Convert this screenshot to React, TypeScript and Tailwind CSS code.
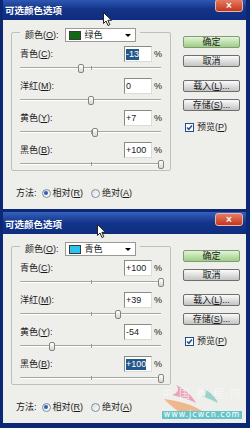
import React from 'react';

type Row = { label: string; hot: string; value: string; num: number; selected?: boolean };

const dialogs: { swatch: string; colorName: string; rows: Row[] }[] = [
  {
    swatch: 'bg-[#0f6a12]',
    colorName: '绿色',
    rows: [
      { label: '青色', hot: 'C', value: '-13', num: -13, selected: true },
      { label: '洋红', hot: 'M', value: '0', num: 0 },
      { label: '黄色', hot: 'Y', value: '+7', num: 7 },
      { label: '黑色', hot: 'B', value: '+100', num: 100 },
    ],
  },
  {
    swatch: 'bg-[#2cc3ee]',
    colorName: '青色',
    rows: [
      { label: '青色', hot: 'C', value: '+100', num: 100 },
      { label: '洋红', hot: 'M', value: '+39', num: 39 },
      { label: '黄色', hot: 'Y', value: '-54', num: -54 },
      { label: '黑色', hot: 'B', value: '+100', num: 100, selected: true },
    ],
  },
];

function Slider({ value }: { value: number }) {
  const pct = ((value + 100) / 200) * 100;
  return (
    <div className="relative h-[10px] mt-[1px]">
      <div className="absolute left-0 right-0 top-[4px] h-[1px] bg-[#a8a8a3]" />
      <div className="absolute left-0 right-0 top-[5px] h-[1px] bg-white" />
      <div className="absolute left-1/2 top-[3px] w-[1px] h-[4px] bg-[#9a9a95]" />
      <div
        className="absolute top-[1px] w-[6px] h-[9px] -ml-[3px] rounded-[2px] border border-[#85857f] bg-gradient-to-b from-white to-[#d6d6d0]"
        style={{ left: `${pct}%` }}
      />
    </div>
  );
}

function ValueRow({ row }: { row: Row }) {
  return (
    <div className="flex flex-col">
      <div className="flex items-center h-[16px]">
        <span className="flex-1">
          {row.label}(<span className="underline">{row.hot}</span>):
        </span>
        <div className="w-[28px] h-[16px] bg-white border border-t-[#8a8a85] border-l-[#8a8a85] border-b-[#dcdcd6] border-r-[#dcdcd6] flex items-center pl-[1px]">
          <span className={row.selected ? 'bg-[#25588a] text-white leading-[11px]' : 'leading-[11px]'}>{row.value}</span>
        </div>
        <span className="w-[7px] ml-[2px]">%</span>
      </div>
      <Slider value={row.num} />
    </div>
  );
}

function Button({ label, hot, tail, primary }: { label: string; hot?: string; tail?: string; primary?: boolean }) {
  return (
    <div
      className={
        'w-[57px] h-[12px] rounded-[2px] border flex items-center justify-center leading-none text-[9px] ' +
        (primary
          ? 'border-[#7f9c72] bg-gradient-to-b from-[#e3f4d8] to-[#9fcd85]'
          : 'border-[#6e6e6e] bg-gradient-to-b from-[#fbfbfb] to-[#c4c4c4]')
      }
    >
      {label}
      {hot && (
        <>
          (<span className="underline">{hot}</span>)
        </>
      )}
      {tail}
    </div>
  );
}

function Radio({ on }: { on?: boolean }) {
  return (
    <span className="w-[9px] h-[9px] rounded-full border border-[#7c8fa8] bg-gradient-to-br from-[#dcdcd6] to-white flex items-center justify-center">
      {on && <span className="w-[4px] h-[4px] rounded-full bg-[#2f62b8]" />}
    </span>
  );
}

function Dialog({ swatch, colorName, rows }: { swatch: string; colorName: string; rows: Row[] }) {
  return (
    <div className="flex flex-col border-l-[3px] border-r-[4px] border-b-[3px] border-[#0c2875]">
      <div className="h-[22px] flex items-start bg-gradient-to-b from-[#3560bd] via-[#133488] to-[#0f2d80]">
        <span className="pl-[2px] pt-[7px] text-[9.5px] leading-[12px] font-bold text-white">可选颜色选项</span>
        <div className="ml-auto mr-[3px] mt-[1px] w-[28px] h-[13px] rounded-[3px] border border-[#e9b7a8] bg-gradient-to-b from-[#e77a62] to-[#c2351d] flex items-center justify-center">
          <span className="text-white text-[10px] font-bold leading-none">×</span>
        </div>
      </div>
      <div className="flex h-[189px] bg-[#eeeeea] pl-[8px] pt-[2px]">
        <div className="flex flex-col w-[160px]">
          <fieldset className="m-0 min-w-0 border border-[#c0c0ba] rounded-[2px] pl-[8px] pr-[9px] pt-[4px] pb-[1px] flex flex-col gap-[5px]">
            <legend className="pl-[5px] pr-[4px] pt-[6px]">
              <div className="flex items-center h-[14px]">
                <span>
                  颜色(<span className="underline">O</span>):
                </span>
                <div className="ml-[6px] w-[71px] h-[14px] bg-white border border-[#9a9a95] flex items-center px-[3px]">
                  <span className={'w-[12px] h-[9px] border border-[#3a3a3a] ' + swatch} />
                  <span className="ml-[4px]">{colorName}</span>
                  <span className="ml-auto mr-[1px] border-x-[3px] border-x-transparent border-t-[3px] border-t-black" />
                </div>
              </div>
            </legend>
            {rows.map((r) => (
              <ValueRow key={r.label} row={r} />
            ))}
          </fieldset>
          <div className="flex items-center h-[14px] mt-[15px] ml-[5px]">
            <span>方法:</span>
            <span className="ml-[5px]">
              <Radio on />
            </span>
            <span className="ml-[2px]">
              相对(<span className="underline">R</span>)
            </span>
            <span className="ml-[8px]">
              <Radio />
            </span>
            <span className="ml-[2px]">
              绝对(<span className="underline">A</span>)
            </span>
          </div>
        </div>
        <div className="ml-[12px] pt-[14px] flex flex-col w-[57px]">
          <Button label="确定" primary />
          <div className="mt-[7px]">
            <Button label="取消" />
          </div>
          <div className="mt-[13px]">
            <Button label="载入" hot="L" tail="..." />
          </div>
          <div className="mt-[7px]">
            <Button label="存储" hot="S" tail="..." />
          </div>
          <div className="mt-[11px] ml-[2px] flex items-center h-[10px]">
            <span className="w-[9px] h-[9px] bg-white border border-[#1f4f85] flex items-center justify-center">
              <svg width="7" height="7" viewBox="0 0 7 7">
                <path d="M1 3.5 L2.8 5.3 L6 1.5" fill="none" stroke="#2a4c9a" strokeWidth="1.5" />
              </svg>
            </span>
            <span className="ml-[3px]">
              预览(<span className="underline">P</span>)
            </span>
          </div>
        </div>
      </div>
    </div>
  );
}

function Cursor({ className }: { className: string }) {
  return (
    <svg className={'absolute ' + className} width="10" height="15" viewBox="0 0 10 15">
      <path d="M0.5 0.5 L0.5 11.5 L3 9 L5 13.5 L6.8 12.7 L4.9 8.3 L8.5 8.3 Z" fill="white" stroke="#222" strokeWidth="1" />
    </svg>
  );
}

export default function App() {
  return (
    <div className="relative w-[250px] h-[428px] overflow-hidden bg-[#0c2875] text-[9px] leading-[12px] text-[#1a1a1a] font-['Liberation_Sans','Noto_Sans_CJK_SC',sans-serif]">
      <div className="-mt-[2px]">
        <Dialog {...dialogs[0]} />
      </div>
      <Dialog {...dialogs[1]} />

      <Cursor className="left-[103px] top-[12px]" />
      <Cursor className="left-[97px] top-[224px]" />

      {/* jcwcn watermark */}
      <div className="absolute left-[158px] top-[381px] w-[88px] h-[40px] flex flex-col items-center">
        <svg width="88" height="30" viewBox="0 0 88 30">
          <path d="M18 4 C26 8 34 14 38 22 C30 18 22 16 14 14 C20 12 22 8 18 4 Z" fill="#e58aa8" opacity="0.75" />
          <path d="M46 8 C52 11 58 16 60 22 C54 19 50 17 44 16 C48 14 48 11 46 8 Z" fill="#7cc9c2" opacity="0.75" />
          <path d="M6 18 C18 20 32 22 44 30 L20 30 C14 26 10 22 6 18 Z" fill="#efa067" opacity="0.7" />
          <text x="4" y="17" fontSize="11" fill="#fafafa" opacity="0.7" letterSpacing="6">中国教程网</text>
        </svg>
        <div className="w-[80px] h-[8px] bg-[#69c4c9] text-white text-[8px] leading-[8px] tracking-[1px] text-center font-['DejaVu_Sans',sans-serif]">
          www.jcwcn.com
        </div>
      </div>
    </div>
  );
}
